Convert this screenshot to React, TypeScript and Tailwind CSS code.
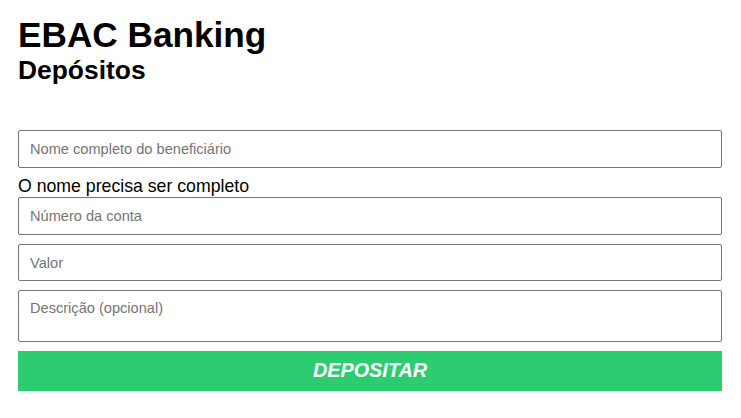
import React from "react";

export default function App() {
  const inputCls =
    "block w-full border border-[#767676] rounded-[2px] bg-white px-[11px] text-[14.6px] text-black placeholder:text-[#757575] outline-none";
  return (
    <div
      className="min-h-[418px] bg-white pl-[18px] pr-[19px] text-black"
      style={{ fontFamily: '"Liberation Sans", Arial, sans-serif' }}
    >
      <h1 className="pt-[15px] text-[35.2px] font-bold leading-[40px]">EBAC Banking</h1>
      <h2 className="text-[26.4px] font-bold leading-[30px]">Depósitos</h2>
      <form className="mt-[45px] w-[704px]" onSubmit={(e) => e.preventDefault()}>
        <input className={`${inputCls} h-[38px]`} placeholder="Nome completo do beneficiário" />
        <p className="mt-[8px] mb-[1px] text-[17.7px] leading-[20px]">O nome precisa ser completo</p>
        <input className={`${inputCls} h-[38px]`} placeholder="Número da conta" />
        <input className={`${inputCls} mt-[9px] h-[37px]`} placeholder="Valor" />
        <textarea
          className={`${inputCls} mt-[9px] h-[52px] resize-none pt-[9px] pb-[7px] leading-[17px]`}
          placeholder="Descrição (opcional)"
        />
        <button
          type="submit"
          className="mt-[9px] flex h-[40px] w-full items-center justify-center bg-[#2ecc71] text-[19.8px] font-bold italic text-white"
        >
          DEPOSITAR
        </button>
      </form>
    </div>
  );
}
